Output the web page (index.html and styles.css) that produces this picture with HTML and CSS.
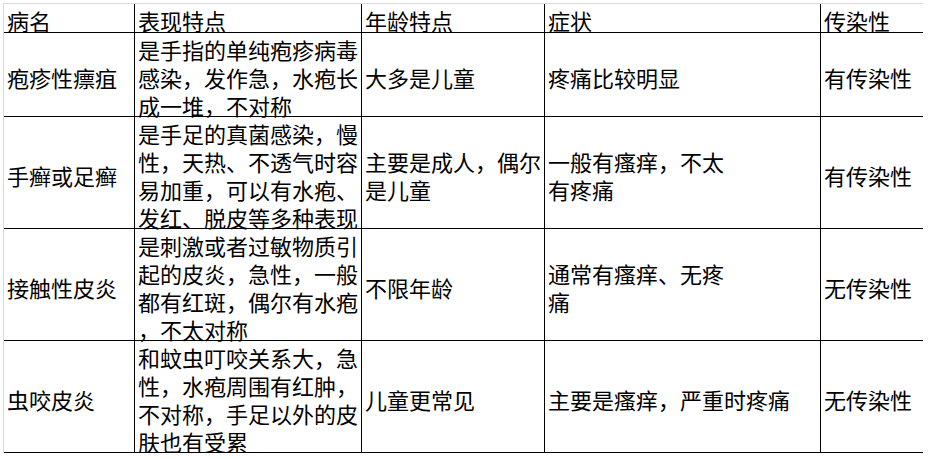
FILE: index.html
```html
<!DOCTYPE html>
<html lang="zh-CN">
<head>
<meta charset="utf-8">
<title>皮肤病对比</title>
<link rel="stylesheet" href="styles.css">
</head>
<body>
<div class="page">
  <div class="sheet">
    <div class="cell head">病名</div>
    <div class="cell head">表现特点</div>
    <div class="cell head">年龄特点</div>
    <div class="cell head">症状</div>
    <div class="cell head last">传染性</div>

    <div class="cell">疱疹性瘭疽</div>
    <div class="cell">是手指的单纯疱疹病毒<br>感染，发作急，水疱长<br>成一堆，不对称</div>
    <div class="cell">大多是儿童</div>
    <div class="cell">疼痛比较明显</div>
    <div class="cell last">有传染性</div>

    <div class="cell">手癣或足癣</div>
    <div class="cell">是手足的真菌感染，慢<br>性，天热、不透气时容<br>易加重，可以有水疱、<br>发红、脱皮等多种表现</div>
    <div class="cell">主要是成人，偶尔<br>是儿童</div>
    <div class="cell">一般有瘙痒，不太<br>有疼痛</div>
    <div class="cell last">有传染性</div>

    <div class="cell">接触性皮炎</div>
    <div class="cell">是刺激或者过敏物质引<br>起的皮炎，急性，一般<br>都有红斑，偶尔有水疱<br>，不太对称</div>
    <div class="cell">不限年龄</div>
    <div class="cell">通常有瘙痒、无疼<br>痛</div>
    <div class="cell last">无传染性</div>

    <div class="cell">虫咬皮炎</div>
    <div class="cell">和蚊虫叮咬关系大，急<br>性，水疱周围有红肿，<br>不对称，手足以外的皮<br>肤也有受累</div>
    <div class="cell">儿童更常见</div>
    <div class="cell">主要是瘙痒，严重时疼痛</div>
    <div class="cell last">无传染性</div>
  </div>
</div>
</body>
</html>
```
FILE: styles.css
```css
html, body {
  margin: 0;
  padding: 0;
  background: #ffffff;
}

.page {
  padding: 3px 0 0 3px;
}

.sheet {
  display: grid;
  grid-template-columns: 131px 227px 183px 276px 102px;
  grid-template-rows: 29px 84px 112px 112px 112px;
  width: 919px;
  border-top: 1px solid #d9d9d9;
  border-left: 1px solid #d9d9d9;
  font-family: "Noto Sans CJK SC", "Noto Sans", sans-serif;
  font-size: 22px;
  line-height: 28px;
  color: #000000;
}

.cell {
  box-sizing: border-box;
  display: flex;
  align-items: center;
  padding: 4px 0 0 3px;
  border-right: 1px solid #000000;
  border-bottom: 1px solid #000000;
  white-space: nowrap;
  min-width: 0;
  min-height: 0;
}

.cell.last {
  border-right: none;
}

.cell.head {
  padding-top: 4px;
}
```
